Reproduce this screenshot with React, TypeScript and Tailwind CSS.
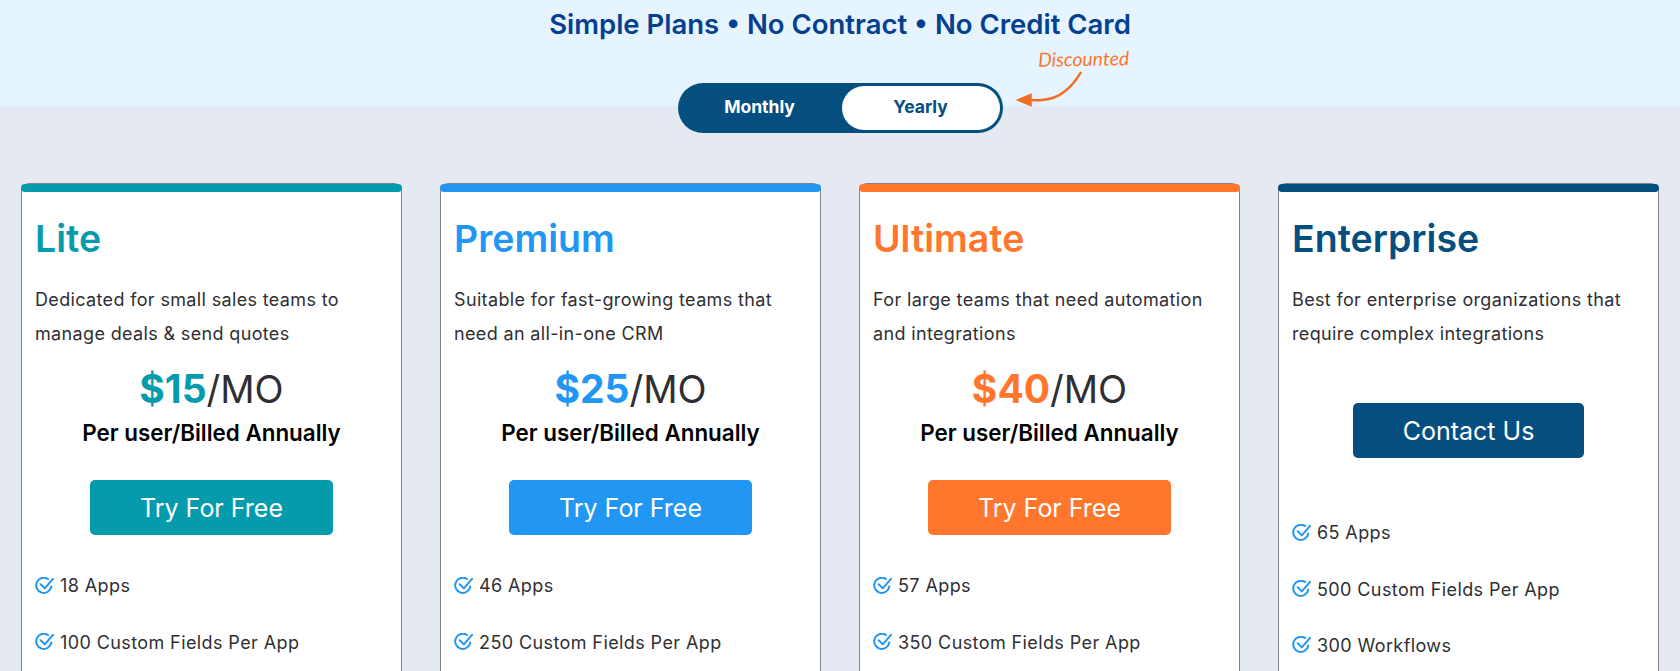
import React from 'react';

interface Plan {
  name: string;
  description: string[];
  price?: string;
  cta: string;
  titleClass: string;
  barClass: string;
  buttonClass: string;
  features: string[];
}

const plans: Plan[] = [
  {
    name: 'Lite',
    description: ['Dedicated for small sales teams to', 'manage deals & send quotes'],
    price: '$15',
    cta: 'Try For Free',
    titleClass: 'text-[#059bad]',
    barClass: 'bg-[#059bad]',
    buttonClass: 'bg-[#059bad]',
    features: ['18 Apps', '100 Custom Fields Per App'],
  },
  {
    name: 'Premium',
    description: ['Suitable for fast-growing teams that', 'need an all-in-one CRM'],
    price: '$25',
    cta: 'Try For Free',
    titleClass: 'text-[#2196f3]',
    barClass: 'bg-[#2196f3]',
    buttonClass: 'bg-[#2196f3]',
    features: ['46 Apps', '250 Custom Fields Per App'],
  },
  {
    name: 'Ultimate',
    description: ['For large teams that need automation', 'and integrations'],
    price: '$40',
    cta: 'Try For Free',
    titleClass: 'text-[#ff762c]',
    barClass: 'bg-[#ff762c]',
    buttonClass: 'bg-[#ff762c]',
    features: ['57 Apps', '350 Custom Fields Per App'],
  },
  {
    name: 'Enterprise',
    description: ['Best for enterprise organizations that', 'require complex integrations'],
    cta: 'Contact Us',
    titleClass: 'text-[#054f80]',
    barClass: 'bg-[#054f80]',
    buttonClass: 'bg-[#054f80]',
    features: ['65 Apps', '500 Custom Fields Per App', '300 Workflows'],
  },
];

const CheckIcon = () => (
  <svg className="h-[18px] w-[19px] shrink-0" viewBox="0 0 19 18" fill="none" stroke="#2196f3" strokeWidth="2" strokeLinecap="round" strokeLinejoin="round">
    <path d="M13 2A7.6 7.6 0 1 0 16.3 9.5" />
    <path d="M5.7 7.3L9.8 11.4L18 1.8" />
  </svg>
);

const PlanCard: React.FC<{ plan: Plan }> = ({ plan }) => {
  return (
    <div className="flex-1 rounded-[8px] border border-[#80848a] bg-white">
      <div className={`-mx-px h-[8px] rounded-[5px] ${plan.barClass}`} />
      <div className="px-[13px] pt-[25px]">
        <h2 className={`text-[37.5px] leading-[44px] font-semibold ${plan.titleClass}`}>{plan.name}</h2>
        <p className="mt-[22px] text-[18px] leading-[34px] tracking-[0.35px] text-[#2f2f33]">
          {plan.description[0]}
          <br />
          {plan.description[1]}
        </p>
        {plan.price ? (
          <div className="mt-[14px] text-center">
            <div className="text-[38px] leading-[48px] text-[#2f2f33]">
              <span className={`text-[39px] font-bold ${plan.titleClass}`}>{plan.price}</span>/MO
            </div>
            <div className="mt-[3px] text-[22.4px] leading-[34px] font-semibold text-black">Per user/Billed Annually</div>
          </div>
        ) : null}
        <div className={`flex justify-center ${plan.price ? 'mt-[30px]' : 'mt-[52px]'}`}>
          <button className={`rounded-[5px] px-[50px] pt-px text-[25px] leading-[54px] text-white ${plan.buttonClass}`}>
            {plan.cta}
          </button>
        </div>
        <ul className={plan.price ? 'mt-[24px]' : 'mt-[48px]'}>
          {plan.features.map((feature) => (
            <li key={feature} className="flex h-[56.4px] items-center gap-[6px] pb-[3px] text-[18px] tracking-[0.4px] text-[#2f2f33]">
              <CheckIcon />
              {feature}
            </li>
          ))}
        </ul>
      </div>
    </div>
  );
};

export default function App() {
  return (
    <div className="flex h-[671px] flex-col overflow-hidden bg-[#e5eaf2] font-['Inter',sans-serif]">
      <header className="h-[106px] shrink-0 bg-[#e6f4ff] pt-[6px] text-center">
        <h1 className="text-[27.5px] leading-[36px] font-semibold text-[#05408f]">
          Simple Plans • No Contract • No Credit Card
        </h1>
      </header>

      <div className="relative mx-auto -mt-[23px] flex h-[50px] w-[325px] shrink-0 rounded-full bg-[#054f80] p-[3px] text-[17.5px] font-bold">
        <span className="flex w-[161px] items-center justify-center pr-[3px] pb-[2px] text-white">Monthly</span>
        <span className="flex flex-1 items-center justify-center rounded-full bg-white pb-[2px] text-[#054f80]">Yearly</span>
        <span className="absolute -top-[39px] left-[360px] -rotate-1 whitespace-nowrap font-['Lato',sans-serif] text-[19.4px] font-normal text-[#ff762c] italic">
          Discounted
        </span>
        <svg className="absolute left-[335px] -top-[14px] h-[50px] w-[72px]" viewBox="0 0 72 50" fill="none">
          <path d="M67.7 3.7C55 25 40 33 17 31" stroke="#f26d21" strokeWidth="2.4" strokeLinecap="round" />
          <path d="M2.7 31L18.7 24.3L18.7 37.7Z" fill="#f26d21" />
        </svg>
      </div>

      <main className="mt-[50px] flex h-[600px] shrink-0 gap-[38px] px-[21px]">
        {plans.map((plan) => (
          <PlanCard key={plan.name} plan={plan} />
        ))}
      </main>
    </div>
  );
}
